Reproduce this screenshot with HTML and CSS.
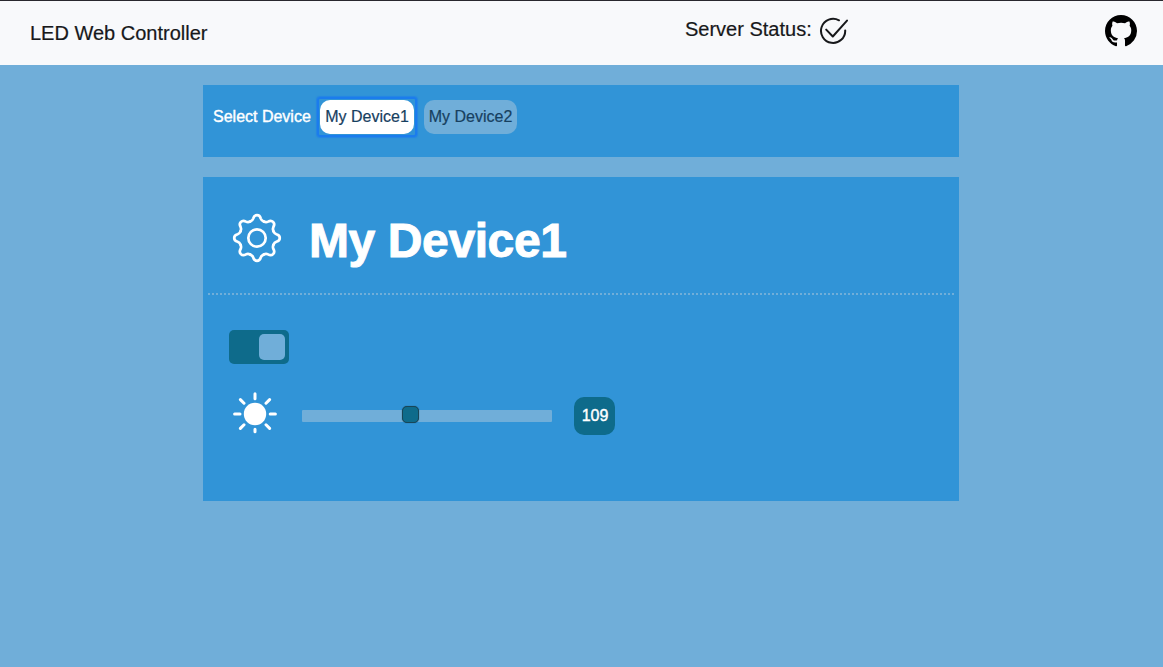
FILE: index.html
```
<!DOCTYPE html>
<html lang="en">
<head>
<meta charset="utf-8">
<title>LED Web Controller</title>
<link rel="stylesheet" href="styles.css">
</head>
<body>
<header class="navbar">
  <span class="brand">LED Web Controller</span>
  <div class="status">
    <span>Server Status:</span>
    <svg class="check" viewBox="0 0 30 28" width="30" height="28"><path d="M20 3.3A12.1 12.1 0 1 0 26.2 13.4M7.2 12.6l6.6 6.9L28 3.6"/></svg>
  </div>
  <svg class="github" viewBox="0 0 16 16" width="32" height="32"><path d="M8 0C3.58 0 0 3.58 0 8c0 3.54 2.29 6.53 5.47 7.59.4.07.55-.17.55-.38 0-.19-.01-.82-.01-1.49-2.01.37-2.53-.49-2.69-.94-.09-.23-.48-.94-.82-1.13-.28-.15-.68-.52-.01-.53.63-.01 1.08.58 1.23.82.72 1.21 1.87.87 2.33.66.07-.52.28-.87.51-1.07-1.78-.2-3.64-.89-3.64-3.95 0-.87.31-1.59.82-2.15-.08-.2-.36-1.02.08-2.12 0 0 .67-.21 2.2.82.64-.18 1.32-.27 2-.27s1.36.09 2 .27c1.53-1.04 2.2-.82 2.2-.82.44 1.1.16 1.92.08 2.12.51.56.82 1.27.82 2.15 0 3.07-1.87 3.75-3.65 3.95.29.25.54.73.54 1.48 0 1.07-.01 1.93-.01 2.2 0 .21.15.46.55.38A8.01 8.01 0 0 0 16 8c0-4.42-3.58-8-8-8z"/></svg>
</header>
<main class="content">
  <section class="picker">
    <span class="picker-label">Select Device</span>
    <button class="device selected">My Device1</button>
    <button class="device">My Device2</button>
  </section>
  <section class="panel">
    <div class="panel-head">
      <svg class="gear" viewBox="-25 -25 50 50" width="50" height="50">
        <defs><path id="tooth" d="M-6.8-16.4C-5.2-17.1-4.3-17.9-3.8-19.4C-3.2-21.7-2-22.8 0-22.8C2-22.8 3.2-21.7 3.8-19.4C4.3-17.9 5.2-17.1 6.8-16.4"/></defs>
        <use href="#tooth"/><use href="#tooth" transform="rotate(45)"/><use href="#tooth" transform="rotate(90)"/><use href="#tooth" transform="rotate(135)"/>
        <use href="#tooth" transform="rotate(180)"/><use href="#tooth" transform="rotate(225)"/><use href="#tooth" transform="rotate(270)"/><use href="#tooth" transform="rotate(315)"/>
        <circle r="8.7"/>
      </svg>
      <h1 class="title">My Device1</h1>
    </div>
    <div class="toggle"><span class="knob"></span></div>
    <div class="brightness">
      <svg class="sun" viewBox="-22 -22 44 44" width="44" height="44"><circle r="11.2"/><path d="M0-20.2v5M0 15.2v2.6M-20.4 0h5.4M15.2 0h5.2M-14.6-14.4l3.6 3.6M14.6-14.4l-3.6 3.6M-14.6 14.4l3.6-3.6M14.6 14.4l-3.6-3.6"/></svg>
      <div class="track"><span class="thumb"></span></div>
      <span class="value">109</span>
    </div>
  </section>
</main>
</body>
</html>
```
FILE: styles.css
```
* { box-sizing: border-box; }
body {
  margin: 0;
  min-height: 667px;
  background: #70aed9;
  font: 16px/24px "Liberation Sans", Arial, sans-serif;
}
svg { display: block; flex: none; }
.navbar {
  display: flex;
  height: 65px;
  padding: 0 26px 0 30px;
  border-top: 1px solid #29282e;
  background: #f8f9fb;
  color: #17181a;
  font-size: 20px;
  -webkit-text-stroke: .2px;
}
.brand { width: 655px; padding-top: 20px; white-space: nowrap; }
.status { display: flex; gap: 7px; padding-top: 16px; }
.check { fill: none; stroke: #17181a; stroke-width: 2; stroke-linecap: round; stroke-linejoin: round; }
.github { margin: 14px 0 0 auto; }
.content { width: 756px; margin: 20px 0 0 203px; }
.picker {
  display: flex;
  height: 72px;
  padding: 15px 10px;
  background: #3194d7;
}
.picker-label {
  width: 107px;
  padding-top: 5px;
  color: #fff;
  white-space: nowrap;
  -webkit-text-stroke: .4px;
}
.device {
  width: 93px;
  height: 34px;
  padding: 0;
  border: 0;
  border-radius: 10px;
  background: #70aed9;
  color: #17405f;
  font: inherit;
  white-space: nowrap;
  -webkit-text-stroke: .2px;
}
.device.selected { position: relative; width: 94px; margin-right: 10px; background: #fff; }
.device.selected::after {
  content: "";
  position: absolute;
  inset: -3px;
  border: 2px solid #1b7ced;
  border-radius: 3px;
  box-shadow: 0 0 1px 1px rgba(27, 124, 237, .6);
}
.panel { height: 324px; margin-top: 20px; padding: 0 5px; background: #3194d7; }
.panel-head {
  display: flex;
  height: 118px;
  padding: 36px 0 0 24px;
  border-bottom: 2px dotted #70aed9;
}
.gear { fill: none; stroke: #fff; stroke-width: 2.7; stroke-linecap: round; }
.title {
  margin: 0 0 0 27px;
  color: #fff;
  font-size: 48px;
  line-height: 56px;
  letter-spacing: -.4px;
  -webkit-text-stroke: 1px;
}
.toggle {
  display: flex;
  justify-content: flex-end;
  width: 60px;
  height: 34px;
  margin: 35px 0 0 21px;
  padding: 4px;
  border-radius: 5px;
  background: #0e6b8b;
}
.knob { width: 26px; height: 26px; border-radius: 5px; background: #70aed9; }
.brightness { display: flex; margin: 28px 0 0 25px; }
.sun { fill: #fff; stroke: #fff; stroke-width: 3; stroke-linecap: round; }
.sun circle { stroke: none; }
.track { position: relative; width: 250px; height: 12px; margin: 18px 22px 0 25px; border-radius: 1px; background: #70aed9; }
.thumb {
  position: absolute;
  left: 100px;
  top: -4px;
  width: 17px;
  height: 17px;
  border: 1px solid #184658;
  border-radius: 5px;
  background: #0e6b8b;
  box-shadow: 0 0 1px #184658;
}
.value {
  width: 41px;
  height: 38px;
  margin-top: 5px;
  padding-left: 1px;
  border-radius: 10px;
  background: #0e6b8b;
  color: #fff;
  line-height: 37px;
  text-align: center;
  -webkit-text-stroke: .4px;
}
```
